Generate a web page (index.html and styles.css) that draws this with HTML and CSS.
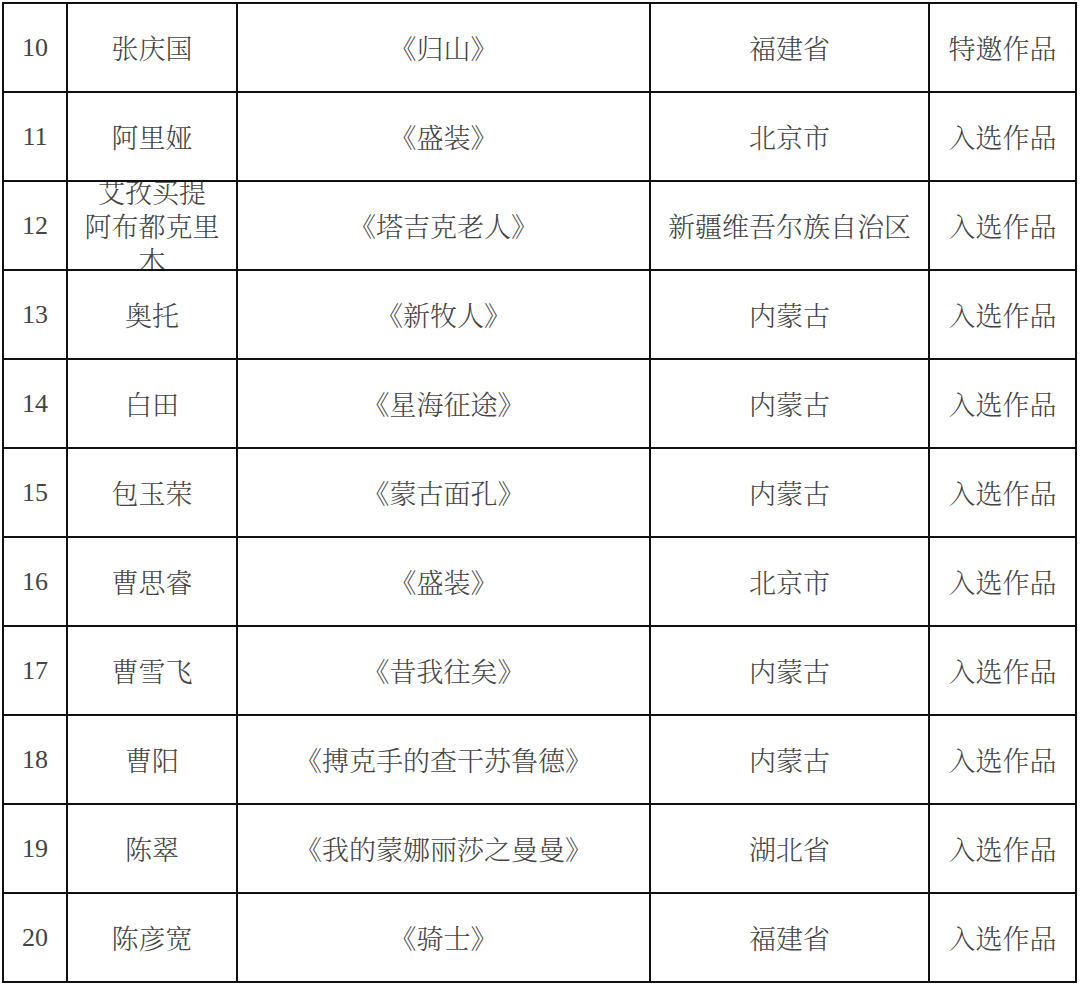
FILE: index.html
```html
<!DOCTYPE html>
<html lang="zh-CN">
<head>
<meta charset="utf-8">
<link rel="stylesheet" href="styles.css">
</head>
<body>
<div class="table">
  <div class="cell num">10</div><div class="cell">张庆国</div><div class="cell">《归山》</div><div class="cell">福建省</div><div class="cell">特邀作品</div>
  <div class="cell num">11</div><div class="cell">阿里娅</div><div class="cell">《盛装》</div><div class="cell">北京市</div><div class="cell">入选作品</div>
  <div class="cell num">12</div><div class="cell multi"><span>艾孜买提<br>阿布都克里木</span></div><div class="cell">《塔吉克老人》</div><div class="cell">新疆维吾尔族自治区</div><div class="cell">入选作品</div>
  <div class="cell num">13</div><div class="cell">奥托</div><div class="cell">《新牧人》</div><div class="cell">内蒙古</div><div class="cell">入选作品</div>
  <div class="cell num">14</div><div class="cell">白田</div><div class="cell">《星海征途》</div><div class="cell">内蒙古</div><div class="cell">入选作品</div>
  <div class="cell num">15</div><div class="cell">包玉荣</div><div class="cell">《蒙古面孔》</div><div class="cell">内蒙古</div><div class="cell">入选作品</div>
  <div class="cell num">16</div><div class="cell">曹思睿</div><div class="cell">《盛装》</div><div class="cell">北京市</div><div class="cell">入选作品</div>
  <div class="cell num">17</div><div class="cell">曹雪飞</div><div class="cell">《昔我往矣》</div><div class="cell">内蒙古</div><div class="cell">入选作品</div>
  <div class="cell num">18</div><div class="cell">曹阳</div><div class="cell">《搏克手的查干苏鲁德》</div><div class="cell">内蒙古</div><div class="cell">入选作品</div>
  <div class="cell num">19</div><div class="cell">陈翠</div><div class="cell">《我的蒙娜丽莎之曼曼》</div><div class="cell">湖北省</div><div class="cell">入选作品</div>
  <div class="cell num">20</div><div class="cell">陈彦宽</div><div class="cell">《骑士》</div><div class="cell">福建省</div><div class="cell">入选作品</div>
</div>
</body>
</html>
```

FILE: styles.css
```css
html, body {
  margin: 0;
  padding: 0;
  background: #ffffff;
}

.table {
  margin: 2px 0 0 2px;
  width: 1075px;
  box-sizing: border-box;
  border: 2px solid #111;
  background: #111;
  display: grid;
  grid-template-columns: 62px 168px 411px 277px 145px;
  grid-auto-rows: 87px;
  gap: 2px;
}

.cell {
  background: #fff;
  display: flex;
  align-items: center;
  justify-content: center;
  text-align: center;
  overflow: hidden;
  font-family: "Noto Serif CJK SC", "Liberation Serif", "Noto Sans CJK SC", serif;
  font-size: 27px;
  font-weight: 300;
  color: #444;
  white-space: nowrap;
}

.num {
  font-family: "Liberation Serif", serif;
  font-size: 26px;
  font-weight: 400;
}

.multi {
  white-space: normal;
  padding: 0 8px;
  line-height: 34px;
}

.multi span {
  display: block;
}
```
